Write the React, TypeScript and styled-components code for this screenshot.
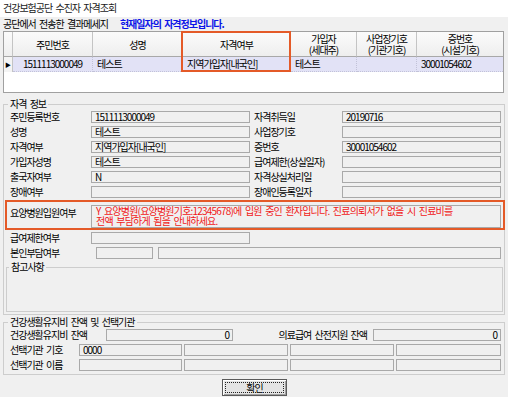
import styled, { createGlobalStyle } from "styled-components";

const GlobalStyle = createGlobalStyle`
  html, body {
    margin: 0;
    padding: 0;
    background: #f0f0f0;
  }
  body {
    font-family: "Noto Sans CJK KR", "Noto Sans", sans-serif;
    font-size: 10px;
    letter-spacing: -1px;
    word-spacing: 2px;
    color: #000;
  }
  * {
    box-sizing: border-box;
  }
`;

export const Window = styled.div`
  width: 508px;
  height: 397px;
  overflow: hidden;
  background: #f0f0f0;
  display: flex;
  flex-direction: column;
`;
export const TitleBar = styled.div`
  height: 17px;
  background: #fff;
  padding-left: 3px;
  line-height: 16px;
  color: #1a1a1a;
`;
export const MessageBar = styled.div`
  height: 14px;
  display: flex;
  align-items: center;
  gap: 12px;
  padding-left: 3px;
  line-height: 14px;
`;
export const Notice = styled.span`
  color: #0b14e8;
  font-weight: bold;
`;

/* result grid */
export const ResultGrid = styled.div`
  position: relative;
  height: 62px;
  margin: 0 4px 0 3px;
  border: 1px solid #a0a0a0;
  background: #fff;
`;
export const GridRow = styled.div`
  display: grid;
  grid-template-columns: 9px 80px 90px 108px 66px 60px 1fr;
`;
export const HeadCell = styled.div`
  height: 25px;
  display: flex;
  flex-direction: column;
  align-items: center;
  justify-content: center;
  text-align: center;
  line-height: 11px;
  background: linear-gradient(#fbfbfb, #eeeeee);
  border-right: 1px solid #c4c4c4;
  border-bottom: 1px solid #a8a8a8;
  &:last-child {
    border-right: none;
  }
`;
export const HeadLine = styled.span`
  display: block;
  height: 11px;
`;
export const DataCell = styled.div<{ $center?: boolean }>`
  height: 15px;
  line-height: 14px;
  padding: 0 4px;
  white-space: nowrap;
  text-align: ${({ $center }) => ($center ? "center" : "left")};
  background: #e2e2f6;
  border-right: 1px dotted #c2c2d8;
  border-bottom: 1px dotted #c2c2d8;
  &:last-child {
    border-right: none;
  }
`;
export const Indicator = styled.div`
  height: 15px;
  background: #f4f4f4;
  border-right: 1px solid #c4c4c4;
  display: flex;
  align-items: center;
  justify-content: center;
  font-size: 6px;
  letter-spacing: 0;
`;
export const ColumnMark = styled.div`
  position: absolute;
  top: -1px;
  left: 177px;
  width: 110px;
  height: 41px;
  border: 2px solid #e45a28;
  pointer-events: none;
`;

/* group boxes */
export const GroupBox = styled.fieldset<{ $mt: number; $pb?: number }>`
  margin: ${({ $mt }) => $mt}px 3px 0 3px;
  padding: 0 3px ${({ $pb }) => $pb ?? 2}px 6px;
  border: 1px solid #cdcdcd;
  min-width: 0;
`;
export const GroupTitle = styled.legend`
  padding: 0 2px;
  margin-left: -2px;
  height: 12px;
  line-height: 12px;
`;
export const MemoBox = styled.fieldset`
  margin: 2px -2px 0 -4px;
  padding: 0 2px 0 4px;
  border: 1px solid #cdcdcd;
  min-width: 0;
`;
export const MemoArea = styled.div`
  height: 38px;
`;

export const Row = styled.div<{ $cols: string; $mt?: number; $gap?: number }>`
  display: grid;
  grid-template-columns: ${({ $cols }) => $cols};
  column-gap: ${({ $gap }) => $gap ?? 0}px;
  margin-top: ${({ $mt }) => $mt ?? 3}px;
  align-items: center;
`;
export const MarkedRow = styled(Row)`
  margin: 2px -4px 0 -5px;
  padding: 3px 2px 0 3px;
  border: 2px solid #e45a28;
  align-items: start;
`;
export const Label = styled.div<{ $right?: boolean }>`
  line-height: 12px;
  white-space: nowrap;
  text-align: ${({ $right }) => ($right ? "right" : "left")};
  padding: ${({ $right }) => ($right ? "0 6px 0 0" : "0")};
`;
export const SideLabel = styled(Label)`
  padding-left: 4px;
`;
export const TallLabel = styled(Label)`
  padding-top: 2px;
`;
export const Field = styled.div<{ $right?: boolean }>`
  height: 12px;
  border: 1px solid #a9a9a9;
  background: #f0f0f0;
  padding: 0 3px;
  line-height: 10px;
  white-space: nowrap;
  text-align: ${({ $right }) => ($right ? "right" : "left")};
`;
export const AlertField = styled(Field)`
  height: 23px;
  color: #f01818;
  line-height: 10px;
  padding: 0 6px 0 4px;
  letter-spacing: -0.8px;
`;

export const ButtonBar = styled.div`
  margin-top: 4px;
  display: flex;
  justify-content: center;
`;
export const OkButton = styled.button`
  width: 65px;
  height: 17px;
  margin-left: 1px;
  padding: 0;
  font: inherit;
  letter-spacing: inherit;
  background: #e4e4e4;
  border: 1px solid #5a5a5a;
  box-shadow: inset 1px 1px 0 #fff, inset -1px -1px 0 #a0a0a0;
  outline: 1px dotted #222;
  outline-offset: -4px;
  line-height: 14px;
`;

const MAIN = "81px 159px 92px 1fr";
const INST = "67px 103px 104px 104px 1fr";

const infoRows: [string, string, string, string][] = [
  ["주민등록번호", "1511113000049", "자격취득일", "20190716"],
  ["성명", "테스트", "사업장기호", ""],
  ["자격여부", "지역가입자[내국인]", "증번호", "30001054602"],
  ["가입자성명", "테스트", "급여제한(상실일자)", ""],
  ["출국자여부", "N", "자격상실처리일", ""],
  ["장애여부", "", "장애인등록일자", ""],
];

export default function App() {
  return (
    <>
      <GlobalStyle />
      <Window>
        <TitleBar>건강보험공단 수진자 자격조회</TitleBar>
        <MessageBar>
          <span>공단에서 전송한 결과메세지</span>
          <Notice>현재일자의 자격정보입니다.</Notice>
        </MessageBar>

        <ResultGrid>
          <GridRow>
            <HeadCell />
            <HeadCell>주민번호</HeadCell>
            <HeadCell>성명</HeadCell>
            <HeadCell>자격여부</HeadCell>
            <HeadCell>
              <HeadLine>가입자</HeadLine>
              <HeadLine>(세대주)</HeadLine>
            </HeadCell>
            <HeadCell>
              <HeadLine>사업장기호</HeadLine>
              <HeadLine>(기관기호)</HeadLine>
            </HeadCell>
            <HeadCell>
              <HeadLine>증번호</HeadLine>
              <HeadLine>(시설기호)</HeadLine>
            </HeadCell>
          </GridRow>
          <GridRow>
            <Indicator>▶</Indicator>
            <DataCell $center>1511113000049</DataCell>
            <DataCell>테스트</DataCell>
            <DataCell>지역가입자[내국인]</DataCell>
            <DataCell>테스트</DataCell>
            <DataCell />
            <DataCell>30001054602</DataCell>
          </GridRow>
          <ColumnMark />
        </ResultGrid>

        <GroupBox $mt={5}>
          <GroupTitle>자격 정보</GroupTitle>
          {infoRows.map(([l1, v1, l2, v2], i) => (
            <Row key={l1} $cols={MAIN} $mt={i === 0 ? 1 : 3}>
              <Label>{l1}</Label>
              <Field>{v1}</Field>
              <SideLabel>{l2}</SideLabel>
              <Field>{v2}</Field>
            </Row>
          ))}
          <MarkedRow $cols="81px 1fr">
            <TallLabel>요양병원입원여부</TallLabel>
            <AlertField>
              Y 요양병원(요양병원기호:12345678)에 입원 중인 환자입니다. 진료의뢰서가 없을 시 진료비를
              <br />
              전액 부담하게 됨을 안내하세요.
            </AlertField>
          </MarkedRow>
          <Row $cols="81px 159px" $mt={2}>
            <Label>급여제한여부</Label>
            <Field />
          </Row>
          <Row $cols="81px 57px 1fr" $gap={5}>
            <Label>본인부담여부</Label>
            <Field />
            <Field />
          </Row>
          <MemoBox>
            <GroupTitle>참고사항</GroupTitle>
            <MemoArea />
          </MemoBox>
        </GroupBox>

        <GroupBox $mt={1} $pb={3}>
          <GroupTitle>건강생활유지비 잔액 및 선택기관</GroupTitle>
          <Row $cols="96px 127px 1fr 128px" $mt={1}>
            <Label>건강생활유지비 잔액</Label>
            <Field $right>0</Field>
            <Label $right>의료급여 산전지원 잔액</Label>
            <Field $right>0</Field>
          </Row>
          <Row $cols={INST} $gap={2}>
            <Label>선택기관 기호</Label>
            <Field>0000</Field>
            <Field />
            <Field />
            <Field />
          </Row>
          <Row $cols={INST} $gap={2}>
            <Label>선택기관 이름</Label>
            <Field />
            <Field />
            <Field />
            <Field />
          </Row>
        </GroupBox>

        <ButtonBar>
          <OkButton>확인</OkButton>
        </ButtonBar>
      </Window>
    </>
  );
}
